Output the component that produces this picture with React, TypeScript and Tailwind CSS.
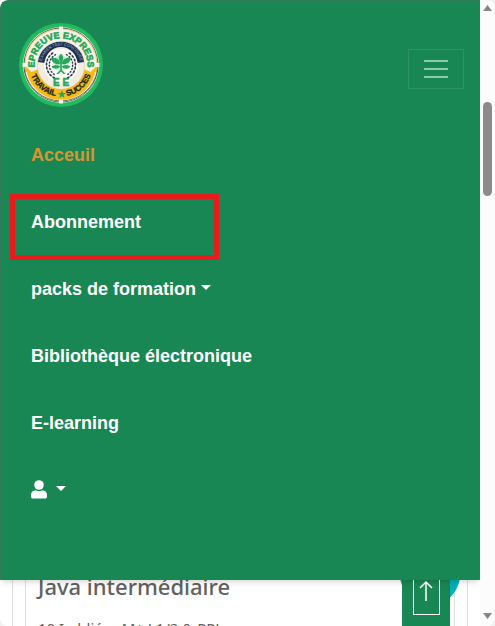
import React, { useState } from 'react';

interface NavItem {
  label: string;
  active?: boolean;
  highlighted?: boolean;
  dropdown?: boolean;
}

const navItems: NavItem[] = [
  { label: 'Acceuil', active: true },
  { label: 'Abonnement', highlighted: true },
  { label: 'packs de formation', dropdown: true },
  { label: 'Bibliothèque électronique' },
  { label: 'E-learning' },
];

const leafAngles = [-150, -134, -118, -102, -86, -70, -54, -38];

const Caret: React.FC = () => (
  <svg viewBox="0 0 10 7" className="h-[7px] w-[10px]" fill="currentColor" aria-hidden="true">
    <path d="M0 0h10L5 5z" />
  </svg>
);

const Logo: React.FC = () => (
  <svg viewBox="0 0 86 86" className="h-[86px] w-[86px]" role="img" aria-label="Epreuve Express">
    <defs>
      <path id="arc-top" d="M17 48a26.500 26.500 0 1 1 52 0" />
      <path id="arc-bottom" d="M11.500 43a31.500 31.500 0 0 0 63 0" />
      <path id="arc-inner" d="M23.500 43a19.500 19.500 0 0 1 39 0" />
    </defs>
    <circle cx="43" cy="43" r="42" fill="#1fbb5c" />
    <circle cx="43" cy="43" r="38" fill="#f8f0e3" />
    <circle cx="43" cy="43" r="37" fill="none" stroke="#4b5656" strokeWidth="0.900" />
    <circle cx="43" cy="43" r="36" fill="none" stroke="#e9c45c" strokeWidth="0.700" />
    {/* yellow ribbon */}
    <path
      d="M6.500 43l7 7 7-3a24 24 0 0 0 45 0l7 3 7-7a36.500 36.500 0 0 1-73 0z"
      fill="#f6bb18"
    />
    <path d="M8 50a35.700 35.700 0 0 0 70 0" fill="none" stroke="#f8f0e3" strokeWidth="1.500" />
    <path d="M6.500 48a37 37 0 0 0 73 0" fill="none" stroke="#4b5656" strokeWidth="0.800" />
    <path d="M43 4.500v4M4.500 43h4M77.500 43h4M43 77.500v4" stroke="#f8f0e3" strokeWidth="4" />
    <circle cx="43" cy="43" r="24" fill="#ded6c8" />
    <circle cx="43" cy="44" r="23" fill="#f3ece0" />
    <path d="M20 40a23.200 23.200 0 0 1 46 0l-7 1a16 16 0 0 0-32 0z" fill="#1b3154" />
    <circle cx="43" cy="44" r="17" fill="#fdfaf4" />
    {leafAngles.map((angle) => (
      <g key={angle} fill="#293b57">
        <ellipse cx="43" cy="28.500" rx="1.700" ry="0.900" transform={`rotate(${angle} 43 43)`} />
        <ellipse cx="43" cy="28.500" rx="1.700" ry="0.900" transform={`rotate(${-angle} 43 43)`} />
        <ellipse cx="43" cy="31.300" rx="1.200" ry="0.800" transform={`rotate(${angle + 8} 43 43)`} />
        <ellipse cx="43" cy="31.300" rx="1.200" ry="0.800" transform={`rotate(${-angle - 8} 43 43)`} />
      </g>
    ))}
    <circle cx="43" cy="41" r="8" fill="#cdeed6" />
    <g fill="#27a85b">
      <path d="M43 31.500c3 3 3 6 0 9-3-3-3-6 0-9z" />
      <path d="M42.500 42c-5 1-8.500-1-9.500-6 5-1 8.500 1 9.500 6zM43.500 42c5 1 8.500-1 9.500-6-5-1-8.500 1-9.500 6z" />
      <path d="M42.500 44.500c-3 3-7 3-9 0 3-2 6-2 9 0zM43.500 44.500c3 3 7 3 9 0-3-2-6-2-9 0z" />
      <path d="M42.200 39h1.600v9l4 4h-2.300L43 49.500 40.500 52h-2.300l4-4z" />
    </g>
    <text
      x="43"
      y="64"
      textAnchor="middle"
      fill="#24a65a"
      stroke="#24a65a"
      strokeWidth="0.500"
      className="font-['Liberation_Sans'] text-[10px] font-bold"
    >
      E E
    </text>
    <text
      fill="#20a959"
      stroke="#20a959"
      strokeWidth="0.600"
      className="font-['Liberation_Sans'] text-[9px] font-bold"
      textAnchor="middle"
    >
      <textPath href="#arc-top" startOffset="50%">EPREUVE EXPRESS</textPath>
    </text>
    <text fill="#a9b5bd" className="font-['Liberation_Sans'] text-[4px]" textAnchor="middle">
      <textPath href="#arc-inner" startOffset="50%">EXAMEN TEST CONCOURS</textPath>
    </text>
    <text
      fill="#22251c"
      stroke="#22251c"
      strokeWidth="0.300"
      className="font-['Liberation_Sans'] text-[8px] font-bold"
      textAnchor="middle"
    >
      <textPath href="#arc-bottom" startOffset="50%">
        TRAVAIL <tspan fill="#20a959" stroke="#20a959">★</tspan> SUCCES
      </textPath>
    </text>
  </svg>
);

const Navbar: React.FC = () => {
  const [open, setOpen] = useState(true);

  return (
    <nav className="relative z-10 rounded-tl-lg border-t border-l border-[#34795a] bg-[#198754] pr-4 pb-[57px] pl-[17px] font-['Liberation_Sans',Arial,sans-serif] shadow-md">
      <div className="flex items-center justify-between pt-[21px]">
        <a href="#accueil" className="pb-2">
          <Logo />
        </a>
        <button
          type="button"
          aria-label="Toggle navigation"
          aria-expanded={open}
          onClick={() => setOpen(!open)}
          className="flex h-10 w-14 items-center justify-center border border-[#309362]"
        >
          <svg viewBox="0 0 24 18" className="h-[18px] w-6" stroke="#8ccba9" strokeWidth="2">
            <path d="M0 1h24M0 9h24M0 17h24" />
          </svg>
        </button>
      </div>

      {open && (
        <ul className="mt-[5px] pl-[13px] text-lg font-bold text-white">
          {navItems.map((item) => (
            <li key={item.label} className="relative flex h-[67px] items-center">
              {item.highlighted && (
                <span className="pointer-events-none absolute top-[6px] -left-[21px] h-[66px] w-[209px] border-[5px] border-[#e81c1c]" />
              )}
              {item.dropdown ? (
                <button type="button" className="flex items-center gap-[5px]">
                  {item.label}
                  <Caret />
                </button>
              ) : (
                <a href="#" className={item.active ? 'text-[#d9952f]' : 'text-white'}>
                  {item.label}
                </a>
              )}
            </li>
          ))}
          <li className="flex h-[67px] items-center">
            <button type="button" aria-label="Compte" className="flex items-center gap-[9px]">
              <svg viewBox="0 0 16 20" className="h-5 w-4" fill="currentColor">
                <circle cx="8" cy="5" r="4.800" />
                <path d="M4.500 10.300c2.200 1.400 4.800 1.400 7 0 2.600.1 4.500 2 4.500 4.500v2c0 1-.8 1.800-1.800 1.800H1.800c-1 0-1.800-.8-1.800-1.800v-2c0-2.500 1.900-4.400 4.500-4.500z" />
              </svg>
              <Caret />
            </button>
          </li>
        </ul>
      )}
    </nav>
  );
};

const CourseCard: React.FC = () => (
  <section className="relative -mt-10 px-3 font-['Noto_Sans','Open_Sans',sans-serif] text-[#616161]">
    <div className="border-x border-[#dedede] px-3">
      <article className="h-40 border-x border-[#dedede] px-3 pt-[30px]">
        <h2 className="text-[22px] leading-8 font-medium">Java intermédiaire</h2>
        <p className="mt-[14px] text-[15px] leading-6">10 I ubliés : M+ L1/2 &amp; PPL</p>
      </article>
    </div>
    <span className="absolute top-[5px] right-[20px] h-[60px] w-[60px] rounded-full bg-[#07adba]" />
    <button
      type="button"
      aria-label="Haut de page"
      className="absolute top-0 right-[30px] flex h-[100px] w-12 justify-center bg-[#198754]"
    >
      <span className="flex h-[75px] w-[27px] items-end justify-center border border-white pb-[13px]">
        <svg viewBox="0 0 14 20" className="h-5 w-[14px]" fill="none" stroke="white" strokeWidth="1.500">
          <path d="M7 20V1M1 7l6-6 6 6" />
        </svg>
      </span>
    </button>
  </section>
);

const ScrollRail: React.FC = () => (
  <div className="flex w-[15px] shrink-0 flex-col items-center rounded-r-lg bg-[#fcfcfc] py-[5px] text-[#858585]">
    <svg viewBox="0 0 9 6" className="h-[6px] w-[9px]" fill="currentColor">
      <path d="M0 6L4.500 0 9 6z" />
    </svg>
    <div className="mt-[91px] h-[94px] w-[9px] rounded-full bg-[#8b8b8b]" />
    <svg viewBox="0 0 9 6" className="mt-auto mb-[2px] h-[6px] w-[9px]" fill="currentColor">
      <path d="M0 0h9L4.500 6z" />
    </svg>
  </div>
);

const App: React.FC = () => {
  return (
    <div className="flex h-screen overflow-hidden bg-[#f1f1f1]">
      <main className="min-w-0 flex-1 overflow-hidden rounded-l-lg bg-white">
        <Navbar />
        <CourseCard />
      </main>
      <ScrollRail />
    </div>
  );
};

export default App;
